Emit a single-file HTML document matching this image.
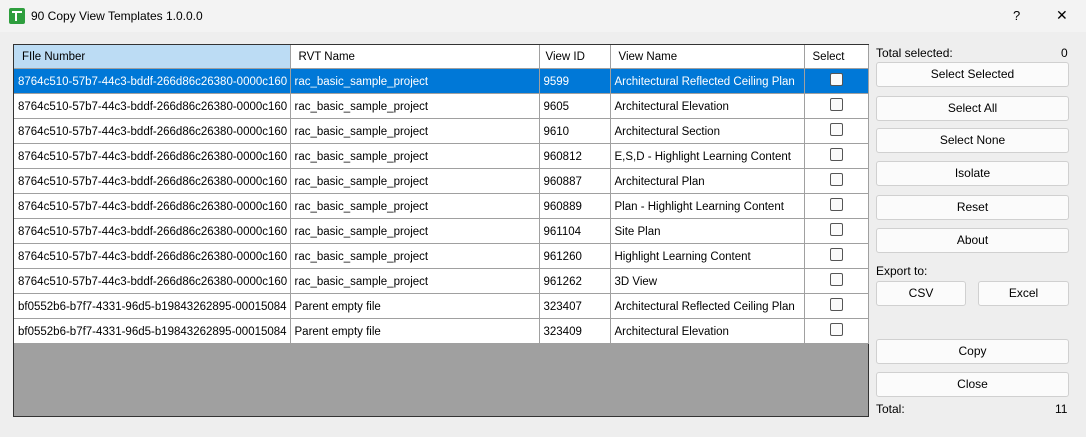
<!DOCTYPE html>
<html><head><style>
body{margin:0;width:1086px;height:437px;background:#eeeeee;font-family:"Liberation Sans",sans-serif;font-size:12px;color:#000;position:relative;overflow:hidden}
.a{position:absolute}
.title{left:0;top:0;width:1086px;height:32px;background:#f3f3f3}
.grid{left:13px;top:44px;width:854px;height:371px;border:1px solid #333;background:#a0a0a0}
table{border-collapse:collapse;background:#fff;table-layout:fixed;width:854px;font-size:11.5px}
td{height:25px;border-right:1px solid #a0a0a0;border-bottom:1px solid #a0a0a0;padding:2px 0 0 4px;box-sizing:border-box;white-space:nowrap;overflow:hidden}
tr.h td{height:23px;padding-left:8px}
tr.s td{background:#0078d7;color:#fff}
td.c{text-align:center;padding:0}
.cb{display:inline-block;width:11px;height:11px;border:1px solid #555;border-radius:2px;background:#fafafa;vertical-align:middle;margin-top:-2px}
.btn{position:absolute;left:876px;width:191px;height:23px;border:1px solid #d0d0d0;border-radius:3px;background:#fbfbfb;text-align:center;line-height:23px}
</style></head><body>
<div class="a title"></div>
<div class="a" style="left:9px;top:8px;width:16px;height:16px;background:#2e9e3e;border-radius:2px"><div class="a" style="left:3px;top:3px;width:10px;height:2px;background:#fff"></div><div class="a" style="left:6px;top:3px;width:2px;height:10px;background:#fff"></div></div>
<div class="a" style="left:31px;top:9px;font-size:12px">90 Copy View Templates 1.0.0.0</div>
<div class="a" style="left:1013px;top:8px;font-size:13px">?</div>
<div class="a" style="left:1056px;top:7px;font-size:14px">✕</div>
<div class="a grid">
<table>
<colgroup><col style="width:276px"><col style="width:249px"><col style="width:71px"><col style="width:194px"><col style="width:64px"></colgroup>
<tr class="h"><td style="background:#bcdcf4">FIle Number</td><td>RVT Name</td><td style="padding-left:6px">View ID</td><td>View Name</td><td style="padding-left:8px">Select</td></tr>
<tr class="s"><td>8764c510-57b7-44c3-bddf-266d86c26380-0000c160</td><td>rac_basic_sample_project</td><td>9599</td><td>Architectural Reflected Ceiling Plan</td><td class="c"><span class="cb"></span></td></tr>
<tr><td>8764c510-57b7-44c3-bddf-266d86c26380-0000c160</td><td>rac_basic_sample_project</td><td>9605</td><td>Architectural Elevation</td><td class="c"><span class="cb"></span></td></tr>
<tr><td>8764c510-57b7-44c3-bddf-266d86c26380-0000c160</td><td>rac_basic_sample_project</td><td>9610</td><td>Architectural Section</td><td class="c"><span class="cb"></span></td></tr>
<tr><td>8764c510-57b7-44c3-bddf-266d86c26380-0000c160</td><td>rac_basic_sample_project</td><td>960812</td><td>E,S,D - Highlight Learning Content</td><td class="c"><span class="cb"></span></td></tr>
<tr><td>8764c510-57b7-44c3-bddf-266d86c26380-0000c160</td><td>rac_basic_sample_project</td><td>960887</td><td>Architectural Plan</td><td class="c"><span class="cb"></span></td></tr>
<tr><td>8764c510-57b7-44c3-bddf-266d86c26380-0000c160</td><td>rac_basic_sample_project</td><td>960889</td><td>Plan - Highlight Learning Content</td><td class="c"><span class="cb"></span></td></tr>
<tr><td>8764c510-57b7-44c3-bddf-266d86c26380-0000c160</td><td>rac_basic_sample_project</td><td>961104</td><td>Site Plan</td><td class="c"><span class="cb"></span></td></tr>
<tr><td>8764c510-57b7-44c3-bddf-266d86c26380-0000c160</td><td>rac_basic_sample_project</td><td>961260</td><td>Highlight Learning Content</td><td class="c"><span class="cb"></span></td></tr>
<tr><td>8764c510-57b7-44c3-bddf-266d86c26380-0000c160</td><td>rac_basic_sample_project</td><td>961262</td><td>3D View</td><td class="c"><span class="cb"></span></td></tr>
<tr><td>bf0552b6-b7f7-4331-96d5-b19843262895-00015084</td><td>Parent empty file</td><td>323407</td><td>Architectural Reflected Ceiling Plan</td><td class="c"><span class="cb"></span></td></tr>
<tr><td>bf0552b6-b7f7-4331-96d5-b19843262895-00015084</td><td>Parent empty file</td><td>323409</td><td>Architectural Elevation</td><td class="c"><span class="cb"></span></td></tr>
</table></div>
<div class="a" style="left:876px;top:46px">Total selected:</div>
<div class="a" style="left:1061px;top:46px">0</div>
<div class="btn" style="top:62px">Select Selected</div>
<div class="btn" style="top:96px">Select All</div>
<div class="btn" style="top:128px">Select None</div>
<div class="btn" style="top:161px">Isolate</div>
<div class="btn" style="top:195px">Reset</div>
<div class="btn" style="top:228px">About</div>
<div class="a" style="left:876px;top:264px">Export to:</div>
<div class="btn" style="top:281px;width:88px">CSV</div>
<div class="btn" style="top:281px;left:978px;width:89px">Excel</div>
<div class="btn" style="top:339px">Copy</div>
<div class="btn" style="top:372px">Close</div>
<div class="a" style="left:876px;top:402px">Total:</div>
<div class="a" style="left:1055px;top:402px">11</div>
</body></html>
